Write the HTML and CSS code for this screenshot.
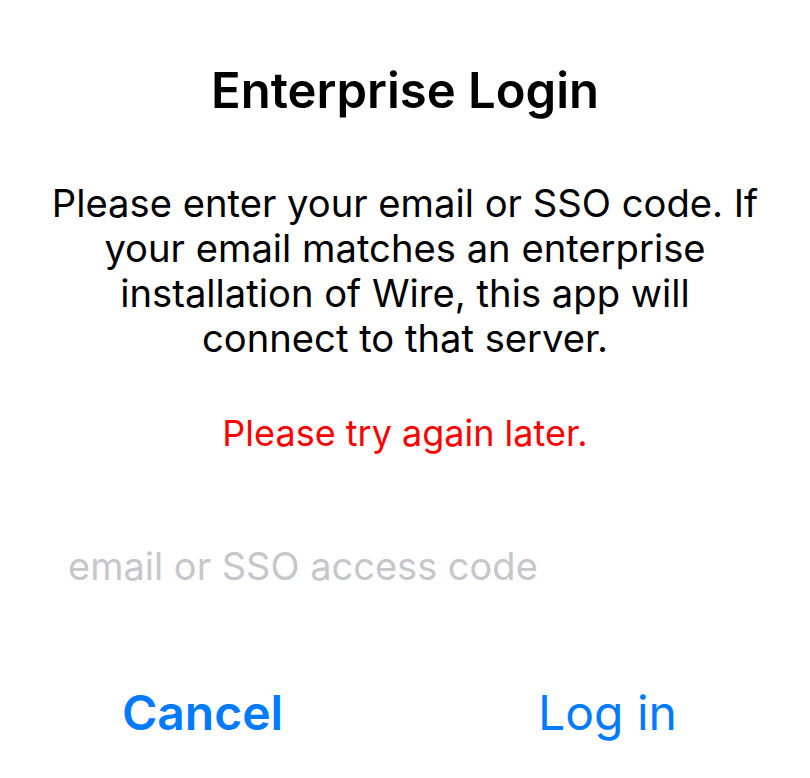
FILE: index.html
```html
<!DOCTYPE html>
<html lang="en">
<head>
<meta charset="utf-8">
<title>Enterprise Login</title>
<link rel="stylesheet" href="styles.css">
</head>
<body>
<div class="alert">
  <div class="content">
    <h1 class="title">Enterprise Login</h1>
    <p class="message">Please enter your email or SSO code. If your email matches an enterprise installation of Wire, this app will connect to that server.</p>
    <p class="error">Please try again later.</p>
  </div>
  <div class="field">
    <input class="input" type="text" placeholder="email or SSO access code">
  </div>
  <div class="actions">
    <button class="action action-cancel" type="button">Cancel</button>
    <button class="action action-login" type="button">Log in</button>
  </div>
</div>
</body>
</html>
```

FILE: styles.css
```css
html, body {
  margin: 0;
  padding: 0;
  background: #ffffff;
}
body {
  font-family: Inter, "Noto Sans", "Liberation Sans", sans-serif;
  color: #000000;
}
.alert {
  width: 810px;
  height: 778px;
  display: flex;
  flex-direction: column;
}
.content {
  padding: 61px 48px 0;
  text-align: center;
}
.title {
  margin: 0;
  font-size: 49px;
  font-weight: 600;
  line-height: 60px;
}
.message {
  margin: 60px 0 0;
  font-size: 38.2px;
  font-weight: 400;
  line-height: 45px;
}
.error {
  margin: 50px 0 0;
  font-size: 36px;
  line-height: 45px;
  color: #ff0000;
}
.field {
  padding: 85px 48px 0;
}
.input {
  display: block;
  width: 100%;
  box-sizing: border-box;
  border: none;
  outline: none;
  padding: 0 20px;
  margin: 0;
  font-family: inherit;
  font-size: 38px;
  line-height: 50px;
  height: 50px;
  background: transparent;
  color: #000;
}
.input::placeholder {
  color: #c7c7cb;
}
.actions {
  display: flex;
  margin-top: 92px;
}
.action {
  flex: 1 1 0;
  border: none;
  background: transparent;
  padding: 0;
  margin: 0;
  font-family: inherit;
  font-size: 48px;
  line-height: 60px;
  color: #007aff;
  cursor: pointer;
}
.action-cancel {
  font-weight: 600;
}
.action-login {
  font-weight: 400;
}
```
